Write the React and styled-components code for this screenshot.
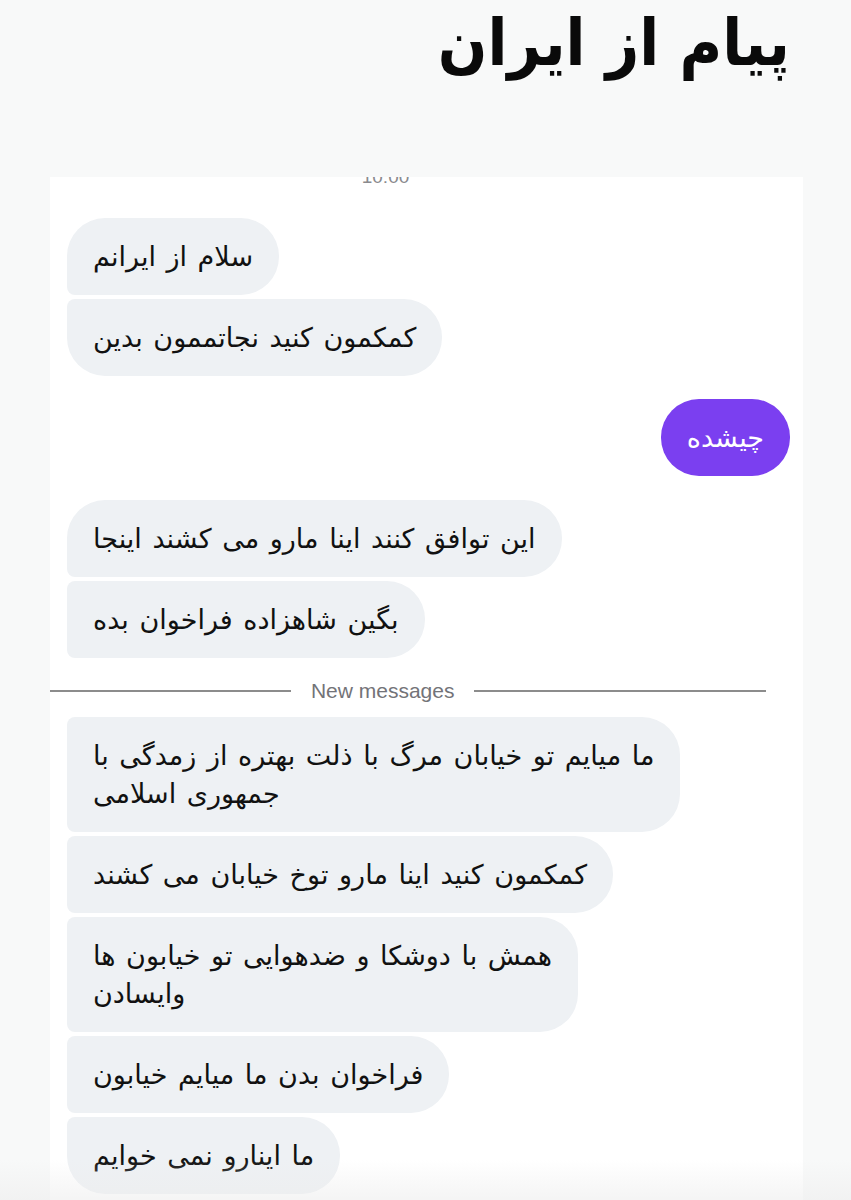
import React from "react";
import styled, { createGlobalStyle } from "styled-components";

const GlobalStyle = createGlobalStyle`
  body {
    margin: 0;
    background: #f8f9f9;
    font-family: "DejaVu Sans", "Noto Sans", sans-serif;
  }
`;

const Page = styled.div`
  position: relative;
  width: 851px;
  height: 1200px;
  overflow: hidden;
  background: #f8f9f9;
  display: flex;
  flex-direction: column;
`;

const Header = styled.header`
  height: 177px;
  display: flex;
  justify-content: flex-end;
  align-items: flex-start;
  padding-right: 61px;
  box-sizing: border-box;
`;

const Title = styled.h1`
  margin: 2px 0 0;
  font-family: "DejaVu Sans", sans-serif;
  font-weight: 700;
  font-size: 64px;
  line-height: 1.3;
  color: #0a0a0a;
  transform: scaleX(0.91);
  transform-origin: right center;
`;

const Card = styled.main`
  flex: 1;
  margin: 0 48px 0 50px;
  background: #ffffff;
  padding: 0 13px 0 17px;
  display: flex;
  flex-direction: column;
`;

const Stamp = styled.div`
  height: 7px;
  overflow: hidden;
  display: flex;
  justify-content: center;
  padding-right: 86px;
  margin-bottom: 34px;
  color: #8a8a8e;
  font-family: "Liberation Sans", Arial, sans-serif;
  font-size: 19px;

  span {
    line-height: 19px;
    margin-top: -10px;
  }
`;

const Group = styled.div`
  display: flex;
  flex-direction: column;
  align-items: ${(p) => (p.$mine ? "flex-end" : "flex-start")};
  gap: 4px;
  margin-bottom: ${(p) => p.$after || 0}px;
`;

const Bubble = styled.div`
  max-width: 620px;
  padding: 19.5px 26px;
  font-size: 27px;
  line-height: 38px;
  word-spacing: 2px;
  white-space: pre-line;
  color: ${(p) => (p.$mine ? "#ffffff" : "#111111")};
  background: ${(p) => (p.$mine ? "#7b3ff0" : "#eef1f4")};
  border-radius: 38px;
  border-top-left-radius: ${(p) => (p.$first || p.$mine ? 38 : 8)}px;
  border-bottom-left-radius: ${(p) => (p.$last || p.$mine ? 38 : 8)}px;
`;

const Divider = styled.div`
  display: flex;
  align-items: center;
  gap: 20px;
  margin: 23px 24px 16px -17px;
  height: 20px;
  color: #737378;
  font-family: "Liberation Sans", Arial, sans-serif;
  font-size: 21px;

  &::before,
  &::after {
    content: "";
    height: 2px;
    background: #8c8c8c;
  }
  &::before {
    flex: 238;
  }
  &::after {
    flex: 288;
  }
`;

const Fade = styled.div`
  position: absolute;
  left: 0;
  right: 0;
  bottom: 0;
  height: 40px;
  background: linear-gradient(rgba(240, 240, 240, 0), rgba(236, 236, 236, 0.55));
  pointer-events: none;
`;

const firstGroup = ["سلام از ایرانم", "کمکمون کنید نجاتممون بدین"];
const secondGroup = ["این توافق کنند اینا مارو می کشند اینجا", "بگین شاهزاده فراخوان بده"];
const newMessages = [
  "ما میایم تو خیابان مرگ با ذلت بهتره از زمدگی با\nجمهوری اسلامی",
  "کمکمون کنید اینا مارو توخ خیابان می کشند",
  "همش با دوشکا و ضدهوایی تو خیابون ها\nوایسادن",
  "فراخوان بدن ما میایم خیابون",
  "ما اینارو نمی خوایم",
];

export default function App() {
  return (
    <Page>
      <GlobalStyle />
      <Header>
        <Title>پیام از ایران</Title>
      </Header>
      <Card>
        <Stamp>
          <span>10:00</span>
        </Stamp>
        <Group $after={23}>
          {firstGroup.map((t, i) => (
            <Bubble key={t} $first={i === 0} $last={i === firstGroup.length - 1}>
              {t}
            </Bubble>
          ))}
        </Group>
        <Group $mine $after={24}>
          <Bubble $mine>چیشده</Bubble>
        </Group>
        <Group>
          {secondGroup.map((t, i) => (
            <Bubble key={t} $first={i === 0}>
              {t}
            </Bubble>
          ))}
        </Group>
        <Divider>New messages</Divider>
        <Group>
          {newMessages.map((t, i) => (
            <Bubble key={t} $last={i === newMessages.length - 1}>
              {t}
            </Bubble>
          ))}
        </Group>
      </Card>
      <Fade />
    </Page>
  );
}
